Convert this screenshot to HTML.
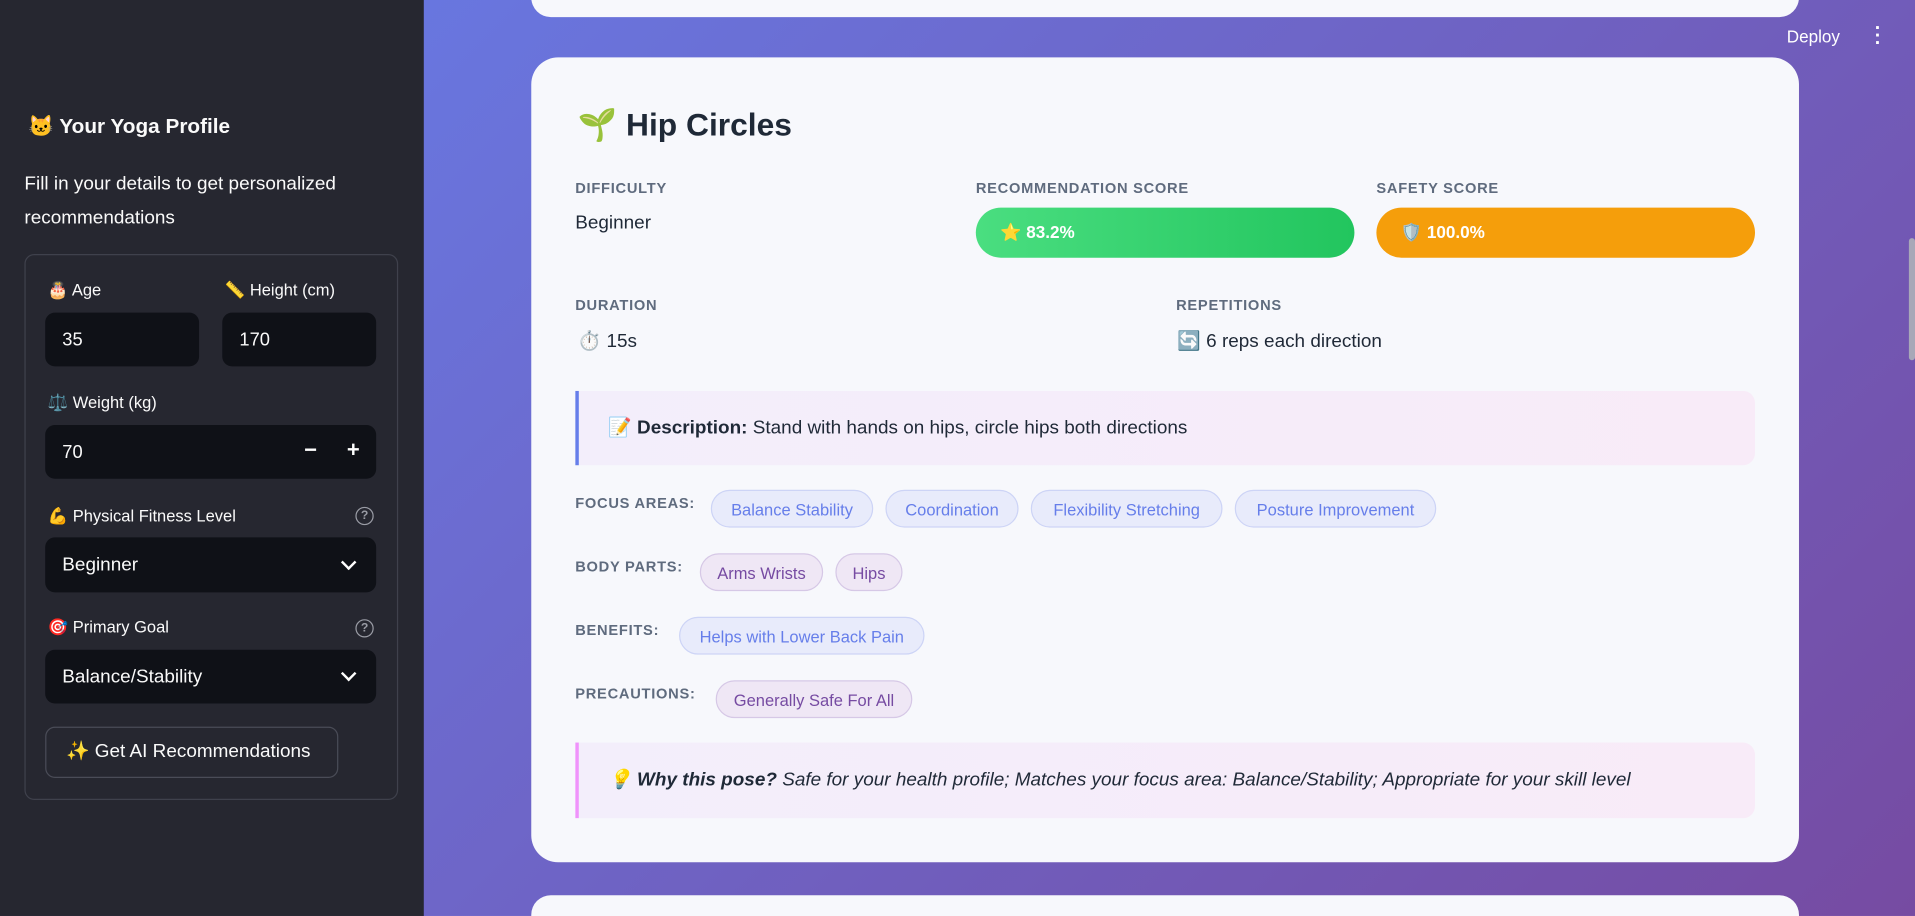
<!DOCTYPE html>
<html><head><meta charset="utf-8"><style>
html,body{margin:0;padding:0;width:1915px;height:916px;overflow:hidden;font-family:"Liberation Sans","Noto Sans CJK SC",sans-serif}
#w{position:absolute;left:0;top:0;width:1568px;height:750px;transform:scale(1.22130);transform-origin:0 0;background:linear-gradient(135deg,#667eea 0%,#764ba2 100%);overflow:hidden}
.a{position:absolute;white-space:nowrap}
#sb{position:absolute;left:0;top:0;width:347px;height:750px;background:#262730;color:#fafafa}
.inp{position:absolute;background:#0f1117;border-radius:8px;color:#fafafa;font-size:15px;line-height:45px;padding-left:14px;box-sizing:border-box}
.lbl{position:absolute;font-size:13.5px;color:#fafafa;white-space:nowrap}
.q{position:absolute;width:13px;height:13px;border:1.5px solid #9a9ca5;border-radius:50%;font-size:10px;line-height:13px;text-align:center;color:#9a9ca5;font-weight:bold}
.card{position:absolute;background:#f7f8fc;border-radius:22px}
.cap{position:absolute;font-size:12px;letter-spacing:.6px;color:#5f6b7e;font-weight:bold;white-space:nowrap}
.val{position:absolute;font-size:15.5px;color:#1f2937;white-space:nowrap}
.tag{position:absolute;height:31px;line-height:31px;border-radius:16px;font-size:13.5px;text-align:center;box-sizing:border-box}
.b{background:#e8ebfb;border:1px solid #cdd4f6;color:#667eea}
.p{background:#efe7f5;border:1px solid #d6c8e6;color:#764ba2}
.chev{position:absolute;width:7px;height:7px;border-right:2px solid #fff;border-bottom:2px solid #fff;transform:rotate(45deg)}
</style></head><body><div id="w">
<div class="card" style="left:435px;top:-30px;width:1038px;height:44px;border-radius:16px"></div>
<div class="card" style="left:435px;top:733px;width:1038px;height:17px;border-radius:16px 16px 0 0"></div>
<div class="a" style="left:1463px;top:22px;font-size:14px;color:#fff">Deploy</div>
<div class="a" style="left:1535px;top:21px;color:#fff;font-size:16px;line-height:6px;width:4px;text-align:center;font-weight:bold">·<br>·<br>·</div>
<div class="a" style="left:1563px;top:195px;width:5px;height:100px;background:#a8a8b8;border-radius:3px"></div>

<div id="sb">
<div class="a" style="left:23px;top:94px;font-size:17px;font-weight:bold">🐱 Your Yoga Profile</div>
<div class="a" style="left:20px;top:137px;font-size:15.5px;line-height:28px;white-space:normal;width:300px">Fill in your details to get personalized recommendations</div>
<div class="a" style="left:20px;top:208px;width:304px;height:445px;border:1px solid #3f414c;border-radius:8px"></div>
<div class="lbl" style="left:39px;top:230px">🎂 Age</div>
<div class="lbl" style="left:184px;top:230px">📏 Height (cm)</div>
<div class="inp" style="left:37px;top:256px;width:126px;height:44px">35</div>
<div class="inp" style="left:182px;top:256px;width:126px;height:44px">170</div>
<div class="lbl" style="left:39px;top:322px">⚖️ Weight (kg)</div>
<div class="inp" style="left:37px;top:348px;width:271px;height:44px">70</div>
<div class="a" style="left:249px;top:358px;color:#fff;font-size:18px;font-weight:bold">−</div>
<div class="a" style="left:284px;top:358px;color:#fff;font-size:18px;font-weight:bold">+</div>
<div class="lbl" style="left:39px;top:415px">💪 Physical Fitness Level</div>
<div class="q" style="left:291px;top:415px">?</div>
<div class="inp" style="left:37px;top:440px;width:271px;height:45px;font-size:15.5px">Beginner</div>
<div class="chev" style="left:281px;top:456px"></div>
<div class="lbl" style="left:39px;top:506px">🎯 Primary Goal</div>
<div class="q" style="left:291px;top:507px">?</div>
<div class="inp" style="left:37px;top:532px;width:271px;height:44px;font-size:15.5px">Balance/Stability</div>
<div class="chev" style="left:281px;top:547px"></div>
<div class="a" style="left:37px;top:595px;width:240px;height:42px;border:1px solid #4a4c57;border-radius:8px;box-sizing:border-box;font-size:15.5px;line-height:40px;padding-left:16px">✨ Get AI Recommendations</div>
</div>

<div class="card" style="left:435px;top:47px;width:1038px;height:659px"></div>
<div class="a" style="left:473px;top:87px;font-size:26px;color:#1f2937;font-weight:bold">🌱 Hip Circles</div>
<div class="cap" style="left:471px;top:147px">DIFFICULTY</div>
<div class="cap" style="left:799px;top:147px">RECOMMENDATION SCORE</div>
<div class="cap" style="left:1127px;top:147px">SAFETY SCORE</div>
<div class="val" style="left:471px;top:174px">Beginner</div>
<div class="a" style="left:799px;top:170px;width:310px;height:41px;border-radius:21px;background:linear-gradient(90deg,#4ade80,#22c55e);color:#fff;font-size:14px;font-weight:bold;line-height:41px;padding-left:20px;box-sizing:border-box">⭐ 83.2%</div>
<div class="a" style="left:1127px;top:170px;width:310px;height:41px;border-radius:21px;background:#f59e0b;color:#fff;font-size:14px;font-weight:bold;line-height:41px;padding-left:20px;box-sizing:border-box">🛡️ 100.0%</div>
<div class="cap" style="left:471px;top:243px">DURATION</div>
<div class="cap" style="left:963px;top:243px">REPETITIONS</div>
<div class="val" style="left:473px;top:270px">⏱️ 15s</div>
<div class="val" style="left:964px;top:270px">🔄 6 reps each direction</div>
<div class="a" style="left:471px;top:320px;width:966px;height:61px;background:linear-gradient(90deg,#f3eefb,#f8ebf8);border-left:3px solid #667eea;border-radius:0 10px 10px 0;box-sizing:border-box;font-size:15.5px;line-height:62px;padding-left:24px;color:#1f2937">📝 <b>Description:</b> Stand with hands on hips, circle hips both directions</div>
<div class="cap" style="left:471px;top:405px">FOCUS AREAS:</div>
<div class="tag b" style="left:582px;top:401px;width:133px">Balance Stability</div>
<div class="tag b" style="left:725px;top:401px;width:109px">Coordination</div>
<div class="tag b" style="left:844px;top:401px;width:157px">Flexibility Stretching</div>
<div class="tag b" style="left:1011px;top:401px;width:165px">Posture Improvement</div>
<div class="cap" style="left:471px;top:457px">BODY PARTS:</div>
<div class="tag p" style="left:573px;top:453px;width:101px">Arms Wrists</div>
<div class="tag p" style="left:684px;top:453px;width:55px">Hips</div>
<div class="cap" style="left:471px;top:509px">BENEFITS:</div>
<div class="tag b" style="left:556px;top:505px;width:201px">Helps with Lower Back Pain</div>
<div class="cap" style="left:471px;top:561px">PRECAUTIONS:</div>
<div class="tag p" style="left:586px;top:557px;width:161px">Generally Safe For All</div>
<div class="a" style="left:471px;top:608px;width:966px;height:62px;background:linear-gradient(90deg,#f3eefb,#f8ebf8);border-left:3px solid #f093fb;border-radius:0 10px 10px 0;box-sizing:border-box;font-size:15.5px;line-height:62px;padding-left:24px;color:#1f2937;font-style:italic">💡 <b>Why this pose?</b> Safe for your health profile; Matches your focus area: Balance/Stability; Appropriate for your skill level</div>
</div></body></html>
